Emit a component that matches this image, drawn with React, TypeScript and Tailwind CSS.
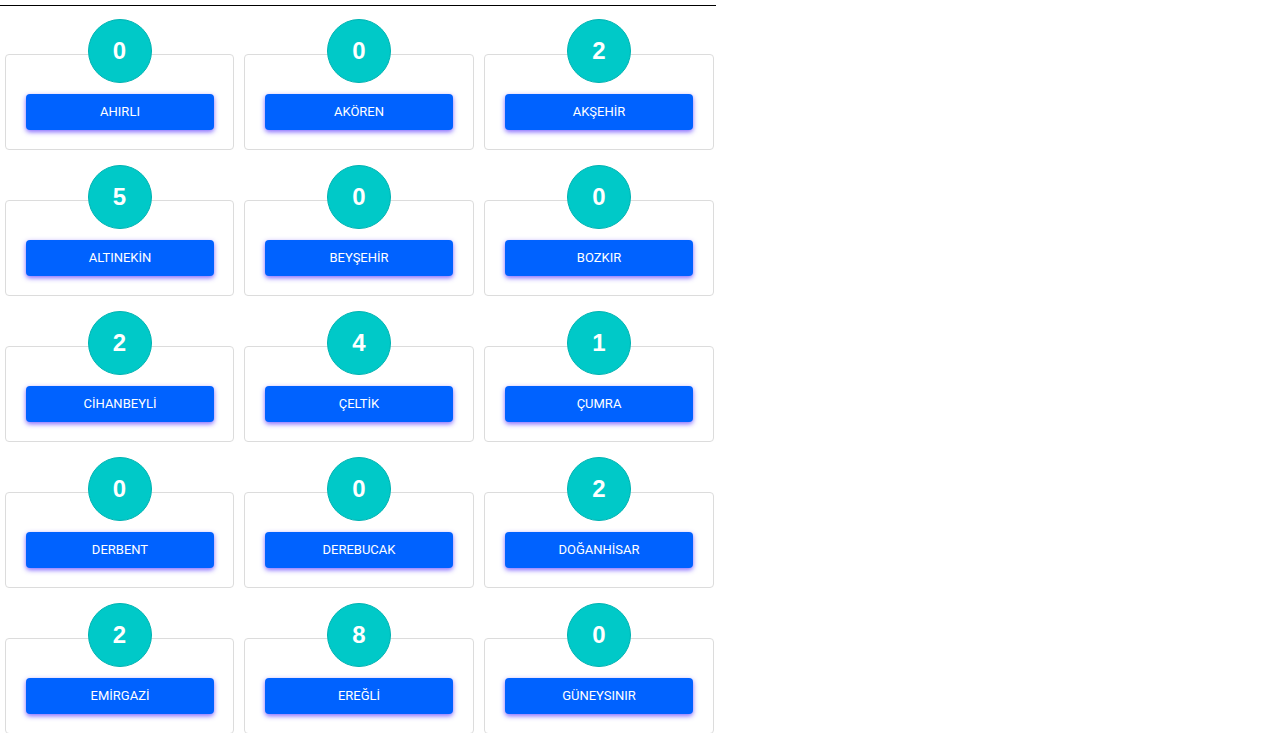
import React from "react";

const items: [string, number][] = [
  ["AHIRLI", 0],
  ["AKÖREN", 0],
  ["AKŞEHİR", 2],
  ["ALTINEKİN", 5],
  ["BEYŞEHİR", 0],
  ["BOZKIR", 0],
  ["CİHANBEYLİ", 2],
  ["ÇELTİK", 4],
  ["ÇUMRA", 1],
  ["DERBENT", 0],
  ["DEREBUCAK", 0],
  ["DOĞANHİSAR", 2],
  ["EMİRGAZİ", 2],
  ["EREĞLİ", 8],
  ["GÜNEYSINIR", 0],
];

export default function App() {
  return (
    <div className="w-[1280px] h-[733px] overflow-hidden bg-white" style={{ fontFamily: "Roboto, 'Liberation Sans', sans-serif" }}>
      <div className="w-[716px] pt-[5px]">
        <div className="h-px bg-black w-full" />
        <div className="grid grid-cols-[229px_230px_230px] gap-x-[10px] gap-y-[15px] pl-[5px] pt-[13px]">
          {items.map(([name, n]) => (
            <div key={name} className="flex flex-col items-center">
              <div className="relative z-10 w-16 h-16 rounded-full bg-[#00c9c8] border border-[#00b3b2] flex items-center justify-center text-white font-bold text-[24px]" style={{ fontFamily: "'Liberation Sans', Arial, sans-serif" }}>
                {n}
              </div>
              <div className="-mt-[29px] w-full h-[96px] border border-[#dcdcdc] rounded-[4px] pt-[39px] pl-[20px]">
                <div className="w-[188px] h-[36px] rounded-[4px] bg-[#0062ff] text-white text-[13px] flex items-center justify-center shadow-[0_2px_5px_rgba(80,40,255,0.7)]">
                  {name}
                </div>
              </div>
            </div>
          ))}
        </div>
      </div>
    </div>
  );
}
